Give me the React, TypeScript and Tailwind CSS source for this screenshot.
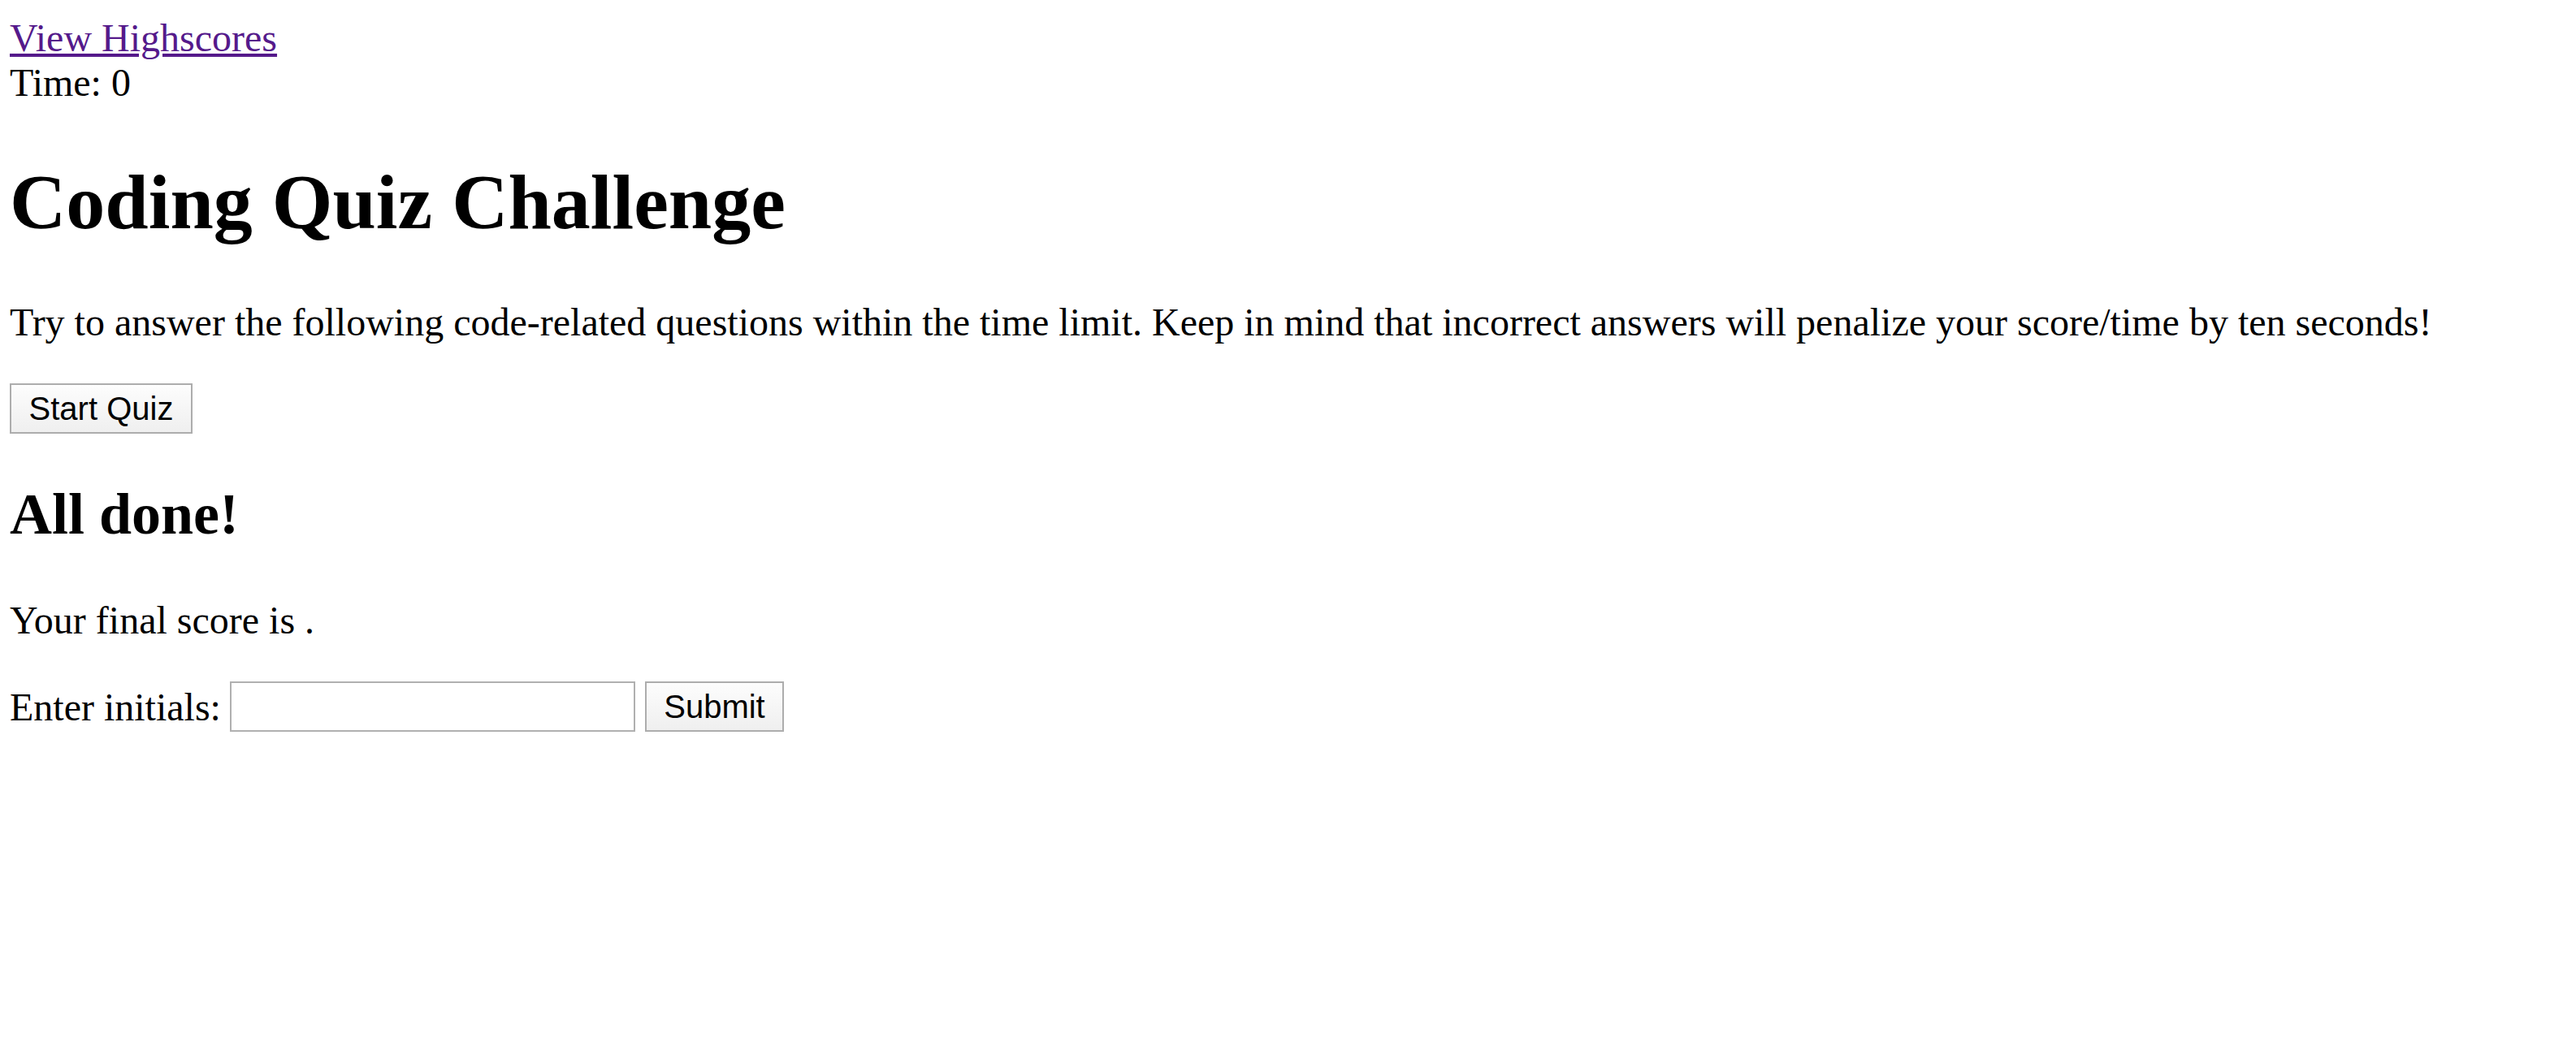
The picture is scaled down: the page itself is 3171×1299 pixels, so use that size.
export default function App() {
  return (
    <main className="min-h-screen bg-white px-[12px] pt-[19px] font-['Liberation_Serif','Times_New_Roman',serif] text-[48px] leading-[55px] text-black">
      {/* header */}
      <div>
        <a href="#" className="text-[#551a8b] underline decoration-[4px] underline-offset-[3px]">
          View Highscores
        </a>
      </div>
      <div>Time: 0</div>

      {/* start screen */}
      <h1 className="mt-[65px] text-[96px] font-bold leading-[110px]">Coding Quiz Challenge</h1>
      <p className="mt-[65px]">
        Try to answer the following code-related questions within the time limit. Keep in mind that incorrect answers
        will penalize your score/time by ten seconds!
      </p>
      <button className="mt-[48px] flex h-[62px] w-[225px] items-center justify-center border-2 border-[#adadad] bg-linear-to-b from-[#fdfdfd] to-[#efefef] font-['Liberation_Sans',Arial,sans-serif] text-[40px] leading-[46px] text-black">
        Start Quiz
      </button>

      {/* end screen */}
      <h2 className="mt-[58px] text-[72px] font-bold leading-[83px]">All done!</h2>
      <p className="mt-[61px]">Your final score is .</p>
      <div className="mt-[48px] flex items-start">
        <label htmlFor="initials" className="pt-[4px]">
          Enter initials:
        </label>
        <input
          id="initials"
          type="text"
          className="ml-[11px] h-[62px] w-[499px] border-2 border-[#b0b0b0] bg-white px-[6px] font-['Liberation_Sans',Arial,sans-serif] text-[40px] outline-none"
        />
        <button className="ml-[12px] flex h-[62px] w-[171px] items-center justify-center border-2 border-[#adadad] bg-linear-to-b from-[#fdfdfd] to-[#efefef] font-['Liberation_Sans',Arial,sans-serif] text-[40px] leading-[46px] text-black">
          Submit
        </button>
      </div>
    </main>
  );
}
